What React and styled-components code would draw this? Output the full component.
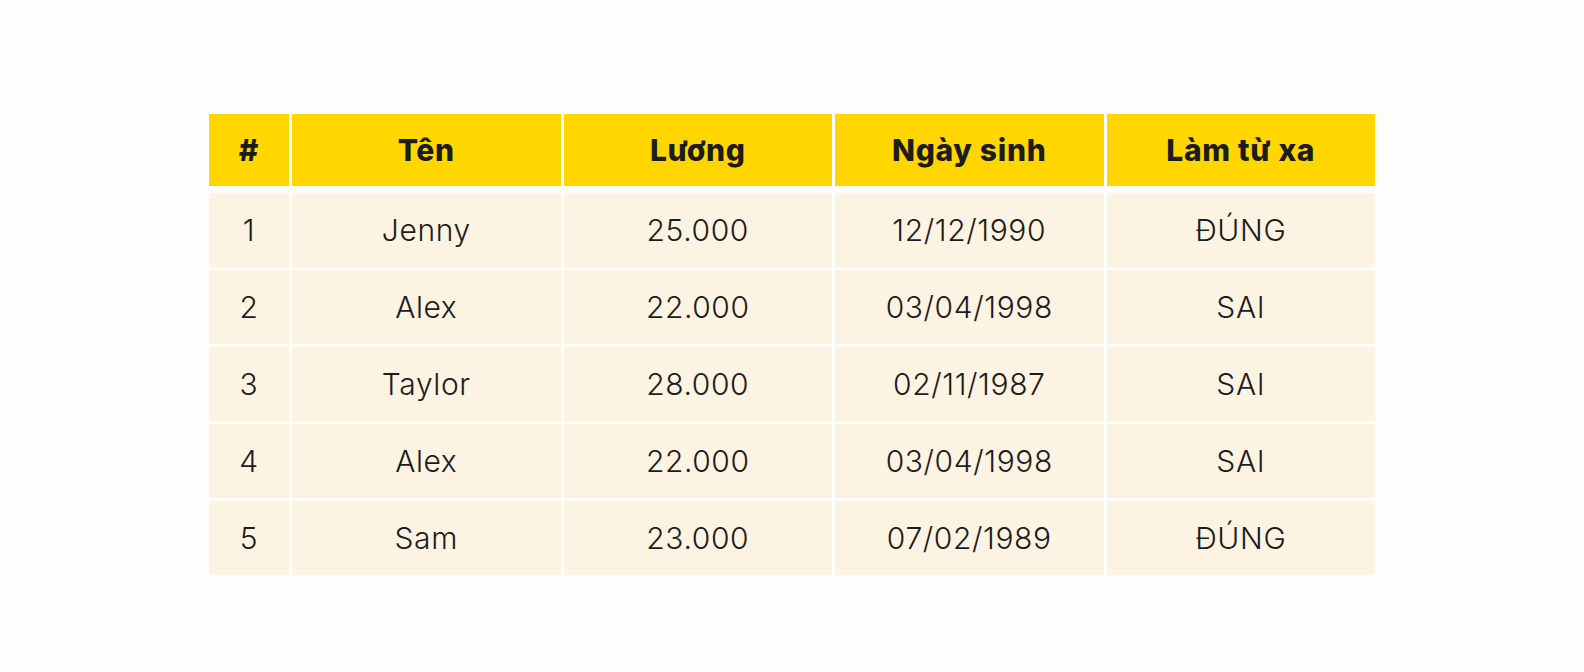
import React from 'react';
import styled, { createGlobalStyle } from 'styled-components';

const GlobalStyle = createGlobalStyle`
  html, body {
    margin: 0;
    padding: 0;
    background: #fdfdfc;
    font-family: Inter, "Noto Sans", sans-serif;
    color: #1c1c1c;
  }
`;

const Page = styled.div`
  width: 1584px;
  height: 672px;
  box-sizing: border-box;
  padding: 114px 0 0 209px;
`;

const Table = styled.div`
  width: 1166px;
  display: flex;
  flex-direction: column;
  gap: 7px;
`;

const Row = styled.div`
  display: grid;
  grid-template-columns: 80px repeat(4, 1fr);
  column-gap: 3px;
`;

const Body = styled.div`
  display: flex;
  flex-direction: column;
  gap: 3px;
`;

const Cell = styled.div`
  height: ${(p) => (p.$head ? '72px' : '74px')};
  display: flex;
  align-items: center;
  justify-content: center;
  background: ${(p) => (p.$head ? '#ffd600' : '#fcf3e2')};
  font-size: 30px;
  font-weight: ${(p) => (p.$head ? 800 : 350)};
  letter-spacing: ${(p) => (p.$head ? '0.7px' : '0.6px')};
`;

const headers = ['#', 'Tên', 'Lương', 'Ngày sinh', 'Làm từ xa'];

const rows = [
  ['1', 'Jenny', '25.000', '12/12/1990', 'ĐÚNG'],
  ['2', 'Alex', '22.000', '03/04/1998', 'SAI'],
  ['3', 'Taylor', '28.000', '02/11/1987', 'SAI'],
  ['4', 'Alex', '22.000', '03/04/1998', 'SAI'],
  ['5', 'Sam', '23.000', '07/02/1989', 'ĐÚNG'],
];

const App = () => {
  return (
    <Page>
      <GlobalStyle />
      <Table>
        <Row>
          {headers.map((h) => (
            <Cell $head key={h}>{h}</Cell>
          ))}
        </Row>
        <Body>
          {rows.map((r, i) => (
            <Row key={i}>
              {r.map((v, j) => (
                <Cell key={j}>{v}</Cell>
              ))}
            </Row>
          ))}
        </Body>
      </Table>
    </Page>
  );
};

export default App;
